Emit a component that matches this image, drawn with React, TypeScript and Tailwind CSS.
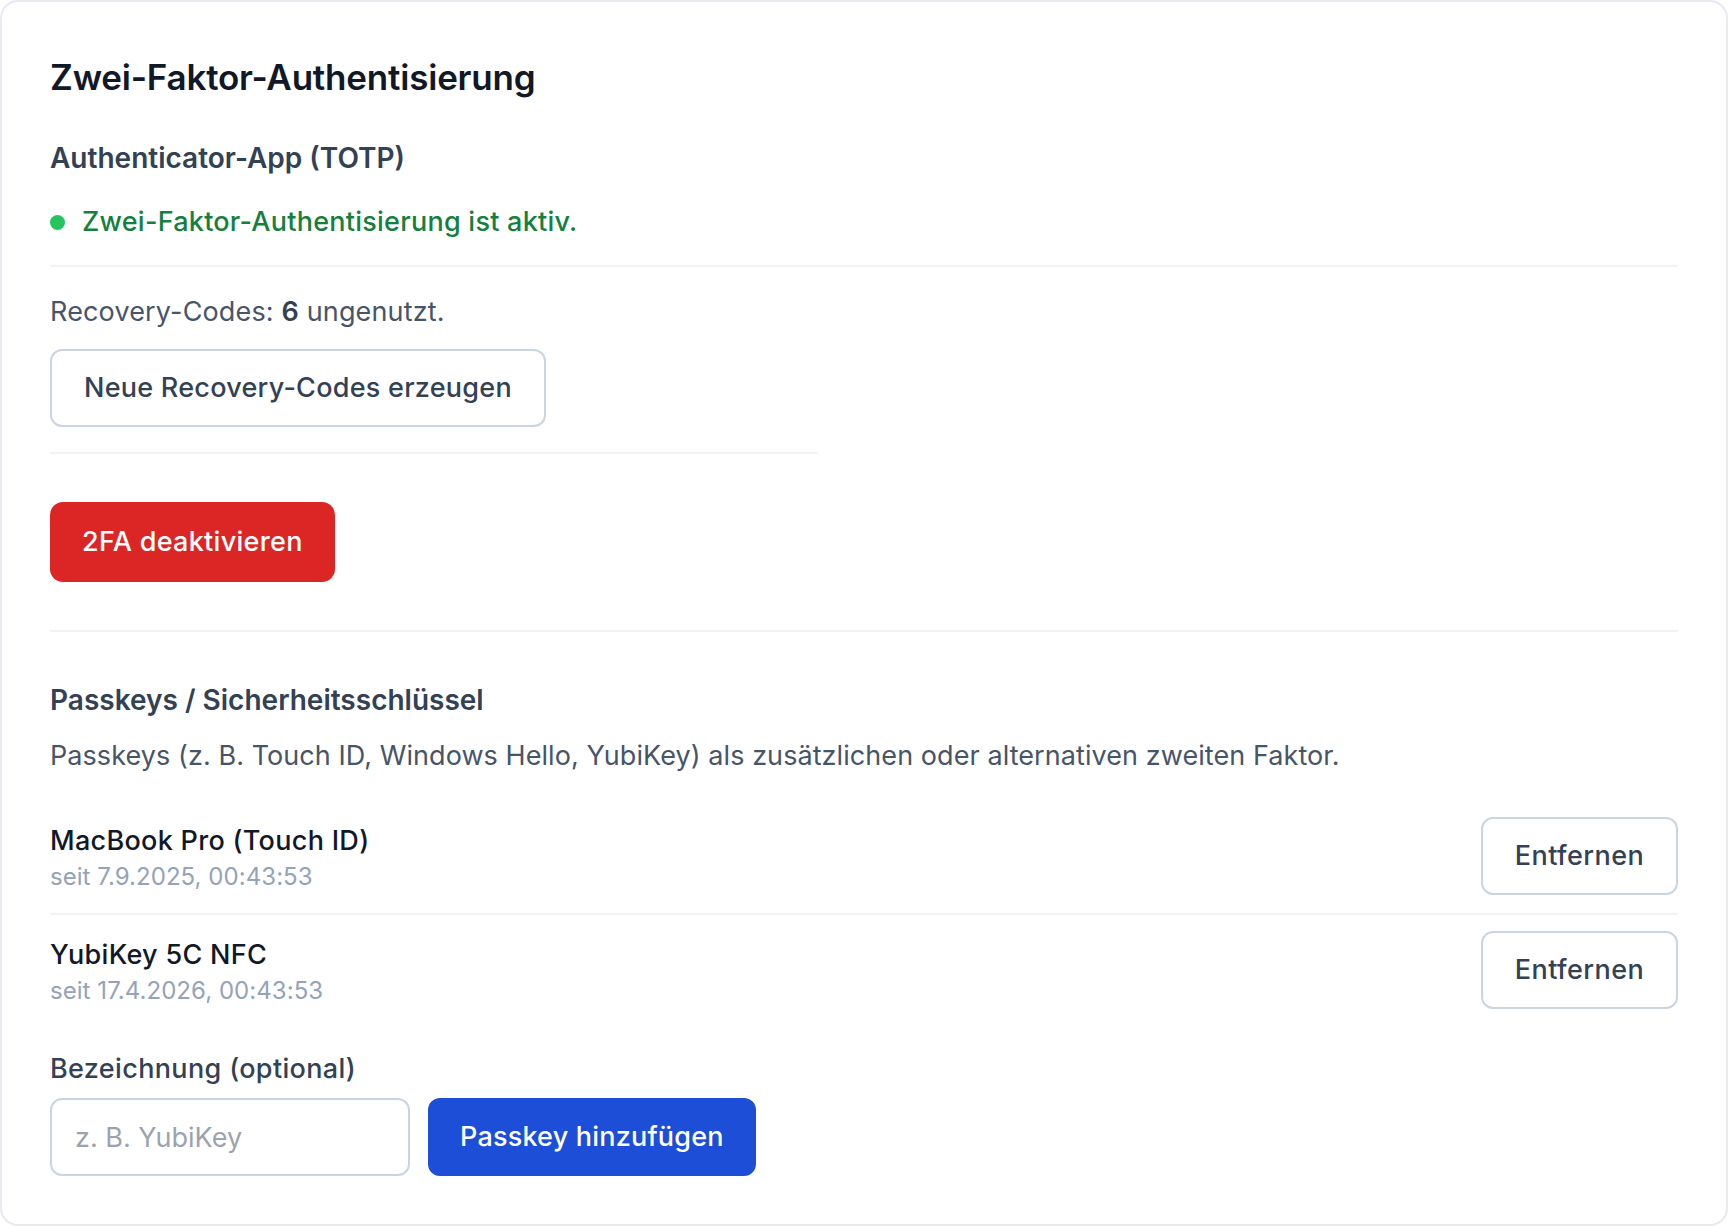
import React from "react";

const passkeys = [
  { name: "MacBook Pro (Touch ID)", since: "seit 7.9.2025, 00:43:53" },
  { name: "YubiKey 5C NFC", since: "seit 17.4.2026, 00:43:53" },
];

function Divider({ className = "" }: { className?: string }) {
  return <div className={`h-[2px] bg-[#f1f3f6] ${className}`} />;
}

export default function App() {
  return (
    <div
      className="min-h-screen bg-white"
      style={{ fontFamily: "Inter, 'Noto Sans', sans-serif" }}
    >
      <div className="flex flex-col rounded-[18px] border-2 border-[#e8eaf0] bg-white p-12">
        {/* Titel */}
        <h2 className="mt-[3px] text-[35px] leading-[48px] font-semibold tracking-[-0.2px] text-[#111827]">
          Zwei-Faktor-Authentisierung
        </h2>

        {/* TOTP */}
        <h3 className="mt-[37px] text-[28px] leading-[40px] font-semibold text-[#334155]">
          Authenticator-App (TOTP)
        </h3>
        <div className="mt-[24px] flex items-center gap-[17px]">
          <span className="h-[15px] w-[15px] rounded-full bg-[#22c55e]" />
          <span className="text-[27px] leading-[40px] font-medium tracking-[0.25px] text-[#15803d]">
            Zwei-Faktor-Authentisierung ist aktiv.
          </span>
        </div>

        <Divider className="mt-[23px]" />

        <div className="max-w-[768px]">
          <p className="mt-[25px] text-[27px] leading-[40px] tracking-[0.15px] text-[#475569]">
            Recovery-Codes: <span className="font-semibold text-[#334155]">6</span> ungenutzt.
          </p>
          <button className="mt-[17px] flex h-[78px] items-center rounded-[12px] border-2 border-[#cbd5e1] bg-white px-[32px] text-[27px] font-medium tracking-[0.25px] text-[#334155]">
            Neue Recovery-Codes erzeugen
          </button>
          <Divider className="mt-[25px]" />
        </div>

        <div>
          <button className="mt-[48px] flex h-[80px] items-center rounded-[13px] bg-[#dc2626] px-[32px] text-[27px] font-medium tracking-[0.3px] text-white">
            2FA deaktivieren
          </button>
        </div>

        <Divider className="mt-[48px]" />

        {/* Passkeys */}
        <h3 className="mt-[48px] text-[28px] leading-[40px] font-semibold text-[#334155]">
          Passkeys / Sicherheitsschlüssel
        </h3>
        <p className="mt-[16px] text-[27px] leading-[40px] tracking-[0.07px] text-[#475569]">
          Passkeys (z. B. Touch ID, Windows Hello, YubiKey) als zusätzlichen oder alternativen zweiten Faktor.
        </p>

        <ul className="mt-[23px] flex flex-col">
          {passkeys.map((pk, i) => (
            <li
              key={pk.name}
              className={`flex items-center justify-between ${i > 0 ? "border-t-2 border-[#f1f3f6] pt-[16px] pb-[19px]" : "py-[18px]"}`}
            >
              <div className="flex flex-col">
                <span className="text-[27px] leading-[42px] font-medium tracking-[0.3px] text-[#111827]">{pk.name}</span>
                <span className="text-[24px] leading-[30px] tracking-[0.05px] text-[#94a3b8]">{pk.since}</span>
              </div>
              <button className="flex h-[78px] w-[197px] items-center justify-center rounded-[12px] border-2 border-[#cbd5e1] bg-white text-[27px] font-medium tracking-[0.45px] text-[#334155]">
                Entfernen
              </button>
            </li>
          ))}
        </ul>

        {/* Neuer Passkey */}
        <label className="mt-[21px] text-[27px] leading-[40px] font-medium tracking-[0.35px] text-[#334155]">
          Bezeichnung (optional)
        </label>
        <div className="mt-[9px] flex items-center gap-[18px]">
          <input
            type="text"
            placeholder="z. B. YubiKey"
            className="h-[78px] w-[360px] rounded-[12px] border-2 border-[#cbd5e1] bg-white px-[23px] text-[27px] text-[#111827] placeholder:text-[#9ca3af] outline-none"
          />
          <button className="flex h-[78px] items-center rounded-[12px] bg-[#1d4ed8] px-[32px] text-[27px] font-medium tracking-[0.2px] text-white">
            Passkey hinzufügen
          </button>
        </div>
      </div>
    </div>
  );
}
